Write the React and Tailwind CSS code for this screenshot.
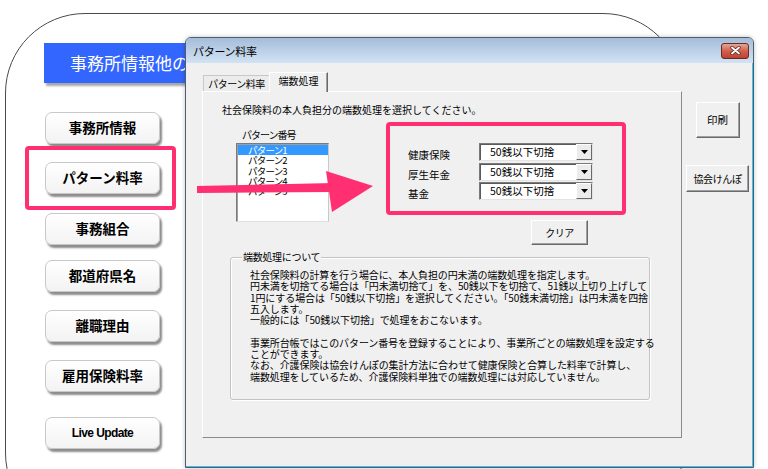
export default function App() {
  const leftButtons = [
    { label: "事務所情報", mt: "mt-[29px]" },
    { label: "パターン料率", mt: "mt-[18px]" },
    { label: "事務組合", mt: "mt-[19px]" },
    { label: "都道府県名", mt: "mt-[15px]" },
    { label: "離職理由", mt: "mt-[18px]" },
    { label: "雇用保険料率", mt: "mt-[18px]" },
  ];
  const combos = ["健康保険", "厚生年金", "基金"];
  const items = ["パターン1", "パターン2", "パターン3", "パターン4", "パターン5"];
  const desc = [
    "社会保険料の計算を行う場合に、本人負担の円未満の端数処理を指定します。",
    "円未満を切捨てる場合は「円未満切捨て」を、50銭以下を切捨て、51銭以上切り上げして",
    "1円にする場合は「50銭以下切捨」を選択してください。「50銭未満切捨」は円未満を四捨",
    "五入します。",
    "一般的には「50銭以下切捨」で処理をおこないます。",
    "\u00a0",
    "事業所台帳ではこのパターン番号を登録することにより、事業所ごとの端数処理を設定する",
    "ことができます。",
    "なお、介護保険は協会けんぽの集計方法に合わせて健康保険と合算した料率で計算し、",
    "端数処理をしているため、介護保険料単独での端数処理には対応していません。",
  ];
  const winBtn =
    "flex items-center justify-center bg-[#f0f0f0] border border-t-white border-l-white border-r-[#696969] border-b-[#696969] shadow-[inset_-1px_-1px_0_#a0a0a0]";

  return (
    <div className="relative w-[768px] h-[469px] overflow-hidden bg-white text-black font-['Noto_Sans_CJK_JP','Noto_Sans',sans-serif]">
      {/* background application window */}
      <div className="absolute left-[5px] top-[13px] w-[678px] h-[520px] rounded-[80px] border-[1.5px] border-[#4a4a4a]">
        <div className="flex flex-col pl-[38px] pt-[28.5px]">
          <div className="flex h-[40px] w-[200px] items-center bg-[#3366ff] pl-[26px] text-[17px] text-white shadow-[2px_3px_2px_rgba(0,0,0,0.35)]">
            事務所情報他の設定
          </div>
          {leftButtons.map((b) => (
            <div
              key={b.label}
              className={`${b.mt} ml-[1px] flex h-[32px] w-[115px] items-center justify-center rounded-[7px] border border-[#c8c8c8] bg-gradient-to-b from-white to-[#f3f3f3] text-[13.5px] font-bold shadow-[2px_3px_2px_rgba(0,0,0,0.45)]`}
            >
              {b.label}
            </div>
          ))}
          <div className="mt-[25px] ml-[1px] flex h-[32px] w-[115px] items-center justify-center rounded-[7px] border border-[#c8c8c8] bg-gradient-to-b from-white to-[#f3f3f3] font-['Liberation_Sans',sans-serif] text-[12px] font-bold tracking-[-0.6px] shadow-[2px_3px_2px_rgba(0,0,0,0.45)]">
            Live Update
          </div>
        </div>
      </div>

      {/* dialog window */}
      <div className="absolute left-[185px] top-[37px] flex h-[431px] w-[569px] flex-col rounded-t-[6px] border border-[#4f5d6c] bg-[#f0f0f0] shadow-[0_0_4px_rgba(0,0,0,0.25)]">
        <div className="flex h-[25px] items-center justify-between rounded-t-[5px] bg-gradient-to-b from-[#a5bdda] to-[#d2e2f3] pl-[7px] pr-[4px]">
          <span className="text-[11px] leading-[12px] tracking-[-0.3px]">パターン料率</span>
          <div className="flex h-[16px] w-[28px] items-center justify-center rounded-[3px] border border-[#6a2b22] bg-gradient-to-b from-[#e6a595] via-[#d0604d] to-[#c0412f]">
            <svg width="11" height="9" viewBox="0 0 11 9">
              <path d="M2 1.5 L9 7.5 M9 1.5 L2 7.5" stroke="#5a2a22" strokeWidth="3.4" strokeLinecap="round" />
              <path d="M2 1.5 L9 7.5 M9 1.5 L2 7.5" stroke="#ffffff" strokeWidth="1.8" strokeLinecap="round" />
            </svg>
          </div>
        </div>

        <div className="flex flex-1 border-b border-r border-[#41c0ee]">
          {/* tabs + panel */}
          <div className="flex flex-col pl-[16px] pt-[9px]">
            <div className="flex h-[19px] items-end pl-[1px]">
              <div className="flex h-[16px] w-[67px] items-center justify-center border-l border-t border-r border-l-[#c8c8c8] border-t-[#c8c8c8] border-r-[#a0a0a0] bg-[#ececec] text-[10px] leading-[12px] tracking-[-0.5px]">
                パターン料率
              </div>
              <div className="relative z-10 -mb-px -ml-px flex h-[20px] w-[59px] items-start justify-center border-l border-t border-r border-l-white border-t-white border-r-[#696969] bg-[#f0f0f0] pt-[2px] text-[10px] leading-[12px] shadow-[inset_-1px_0_0_#a0a0a0]">
                端数処理
              </div>
            </div>
            <div className="flex h-[347px] w-[480px] flex-col border border-b-[#8a8a8a] border-l-white border-r-[#8a8a8a] border-t-white pl-[19px] pt-[12px]">
              <div className="text-[10px] leading-[12px]">
                社会保険料の本人負担分の端数処理を選択してください。
              </div>
              <div className="mt-[13px] flex">
                <div className="ml-[14px] flex flex-col">
                  <div className="pl-[6px] text-[10px] leading-[12px] tracking-[-1px]">パターン番号</div>
                  <div className="mt-[2px] flex h-[79px] w-[93px] flex-col border border-b-[#e0e0e0] border-l-[#7a7a7a] border-r-[#c8c8c8] border-t-[#7a7a7a] bg-white shadow-[inset_1px_1px_0_#a0a0a0]">
                    {items.map((it, i) => (
                      <div
                        key={it}
                        className={`h-[10.3px] pl-[10px] text-[9.5px] leading-[10.3px] tracking-[-0.8px] ${i === 0 ? "ml-px mt-px bg-[#3399ff] text-white" : "ml-px"}`}
                      >
                        {it}
                      </div>
                    ))}
                  </div>
                </div>
                <div className="ml-[79px] mt-[14px] flex flex-col">
                  <div className="grid grid-cols-[71px_114px] gap-y-[1.5px]">
                    {combos.map((c) => (
                      <div key={c} className="contents">
                        <div className="flex h-[18px] items-end text-[10.5px] leading-[13px]">{c}</div>
                        <div className="flex h-[18px] w-[114px] border border-b-[#e3e3e3] border-l-[#7a7a7a] border-r-[#e3e3e3] border-t-[#7a7a7a] bg-white shadow-[inset_1px_1px_0_#5a5a5a]">
                          <div className="flex flex-1 items-center pl-[10px] text-[10.5px] leading-[12px]">50銭以下切捨</div>
                          <div className="flex h-full w-[16px] items-center justify-center border border-b-[#696969] border-l-white border-r-[#696969] border-t-white bg-[#ececec]">
                            <svg width="7" height="4" viewBox="0 0 7 4">
                              <path d="M0 0 L7 0 L3.5 4 Z" fill="#000" />
                            </svg>
                          </div>
                        </div>
                      </div>
                    ))}
                  </div>
                  <div className={`${winBtn} ml-[123px] mt-[20px] h-[25px] w-[57px] text-[10px] tracking-[-0.5px]`}>
                    クリア
                  </div>
                </div>
              </div>
              <div className="relative ml-[8px] mt-[12px] h-[143px] w-[420px] rounded-[3px] border border-[#c3c3c3] shadow-[inset_1px_1px_0_#ffffff,1px_1px_0_#ffffff]">
                <div className="absolute -top-[7px] left-[11px] bg-[#f0f0f0] px-[1px] text-[10px] leading-[12px] tracking-[-0.3px]">
                  端数処理について
                </div>
                <div className="pl-[19px] pt-[11px] text-[10px] leading-[11.3px] tracking-[-0.1px]">
                  {desc.map((l, i) => (
                    <div key={i} className="whitespace-nowrap">
                      {l}
                    </div>
                  ))}
                </div>
              </div>
            </div>
          </div>

          {/* right buttons */}
          <div className="ml-[4px] flex w-[63px] flex-col items-center pt-[39px]">
            <div className={`${winBtn} h-[36px] w-[44px] text-[10.5px]`}>印刷</div>
            <div className={`${winBtn} mt-[27px] h-[27px] w-[63px] text-[10px] tracking-[-0.4px]`}>協会けんぽ</div>
          </div>
        </div>
      </div>

      {/* highlight overlays */}
      <div className="absolute left-[25px] top-[146px] h-[64px] w-[151px] rounded-[4px] border-[4px] border-[#ff2f72]" />
      <div className="absolute left-[386px] top-[122px] h-[93px] w-[240px] rounded-[4px] border-[4px] border-[#ff2f72]" />
      <svg className="pointer-events-none absolute left-0 top-0" width="768" height="469" viewBox="0 0 768 469">
        <polygon points="197,186 334,183 334,192 197,193" fill="#ff2f72" />
        <polygon points="326,171 373,186 332,212" fill="#ff2f72" />
      </svg>
    </div>
  );
}
